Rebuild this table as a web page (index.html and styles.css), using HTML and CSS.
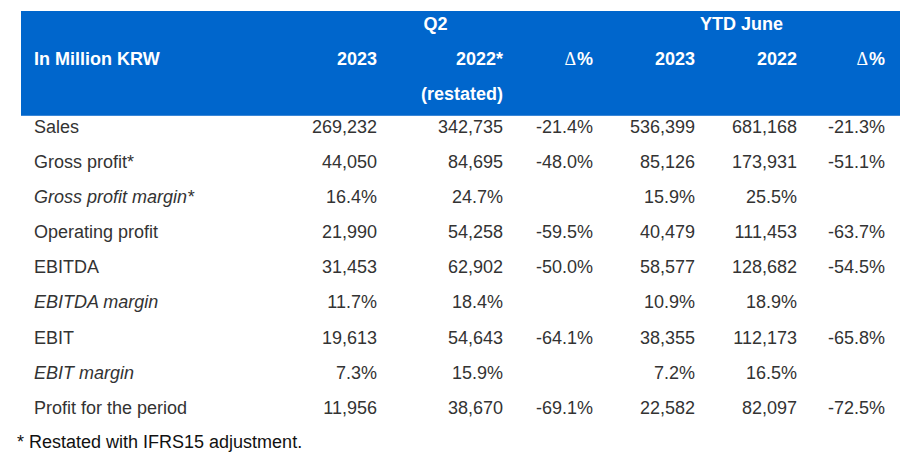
FILE: index.html
```html
<!DOCTYPE html>
<html>
<head>
<meta charset="utf-8">
<link rel="stylesheet" href="styles.css">
</head>
<body>
<div class="report">
  <div class="head">
    <div class="hcell group q2">Q2</div>
    <div class="hcell group ytd">YTD June</div>
    <div class="hcell title">In Million KRW</div>
    <div class="hcell num c2">2023</div>
    <div class="hcell num c3">2022*</div>
    <div class="hcell num c4"><span class="delta">Δ</span>%</div>
    <div class="hcell num c5">2023</div>
    <div class="hcell num c6">2022</div>
    <div class="hcell num c7"><span class="delta">Δ</span>%</div>
    <div class="hcell num c3 r3">(restated)</div>
  </div>
  <div class="body">
    <div class="row"><div class="label">Sales</div><div class="num">269,232</div><div class="num">342,735</div><div class="num">-21.4%</div><div class="num">536,399</div><div class="num">681,168</div><div class="num">-21.3%</div></div>
    <div class="row"><div class="label">Gross profit*</div><div class="num">44,050</div><div class="num">84,695</div><div class="num">-48.0%</div><div class="num">85,126</div><div class="num">173,931</div><div class="num">-51.1%</div></div>
    <div class="row margin"><div class="label">Gross profit margin*</div><div class="num">16.4%</div><div class="num">24.7%</div><div class="num"></div><div class="num">15.9%</div><div class="num">25.5%</div><div class="num"></div></div>
    <div class="row"><div class="label">Operating profit</div><div class="num">21,990</div><div class="num">54,258</div><div class="num">-59.5%</div><div class="num">40,479</div><div class="num">111,453</div><div class="num">-63.7%</div></div>
    <div class="row"><div class="label">EBITDA</div><div class="num">31,453</div><div class="num">62,902</div><div class="num">-50.0%</div><div class="num">58,577</div><div class="num">128,682</div><div class="num">-54.5%</div></div>
    <div class="row margin"><div class="label">EBITDA margin</div><div class="num">11.7%</div><div class="num">18.4%</div><div class="num"></div><div class="num">10.9%</div><div class="num">18.9%</div><div class="num"></div></div>
    <div class="row"><div class="label">EBIT</div><div class="num">19,613</div><div class="num">54,643</div><div class="num">-64.1%</div><div class="num">38,355</div><div class="num">112,173</div><div class="num">-65.8%</div></div>
    <div class="row margin"><div class="label">EBIT margin</div><div class="num">7.3%</div><div class="num">15.9%</div><div class="num"></div><div class="num">7.2%</div><div class="num">16.5%</div><div class="num"></div></div>
    <div class="row"><div class="label">Profit for the period</div><div class="num">11,956</div><div class="num">38,670</div><div class="num">-69.1%</div><div class="num">22,582</div><div class="num">82,097</div><div class="num">-72.5%</div></div>
  </div>
  <p class="note">* Restated with IFRS15 adjustment.</p>
</div>
</body>
</html>
```

FILE: styles.css
```css
html, body {
  margin: 0;
  padding: 0;
  background: #ffffff;
}

body {
  font-family: "Liberation Sans", Arial, sans-serif;
  font-size: 18px;
  color: #333333;
}

.report {
  padding-top: 11px;
}

.head,
.row {
  display: grid;
  grid-template-columns: 257px 99px 126px 90px 102px 102px 88px 15px;
  margin-left: 21px;
}

.head {
  background: #0066cc;
  color: #ffffff;
  font-weight: bold;
  grid-template-rows: 35px 35px 34px;
  border-bottom: 1px solid #3a86d6;
}

.hcell {
  line-height: 20px;
  padding-top: 3px;
  white-space: nowrap;
}

.group {
  grid-row: 1;
  text-align: center;
}

.q2 {
  grid-column: 2 / 5;
}

.ytd {
  grid-column: 5 / 8;
  padding-left: 5px;
}

.title {
  grid-row: 2;
  grid-column: 1;
  padding-left: 13px;
}

.head .num {
  grid-row: 2;
  text-align: right;
}

.head .c2 { grid-column: 2; }
.head .c3 { grid-column: 3; }
.head .c4 { grid-column: 4; }
.head .c5 { grid-column: 5; }
.head .c6 { grid-column: 6; }
.head .c7 { grid-column: 7; }
.head .r3 { grid-row: 3; }

.delta {
  font-weight: normal;
  font-family: "Liberation Serif", "Times New Roman", serif;
  font-size: 18px;
  margin-right: 1px;
}

.row {
  height: 35.1px;
  line-height: 21px;
}

.row > div {
  padding-top: 1px;
  white-space: nowrap;
}

.row .label {
  padding-left: 13px;
}

.row .num {
  text-align: right;
}

.margin .label {
  font-style: italic;
}

.note {
  margin: 0 0 0 17px;
  line-height: 20px;
  color: #111111;
}
```
